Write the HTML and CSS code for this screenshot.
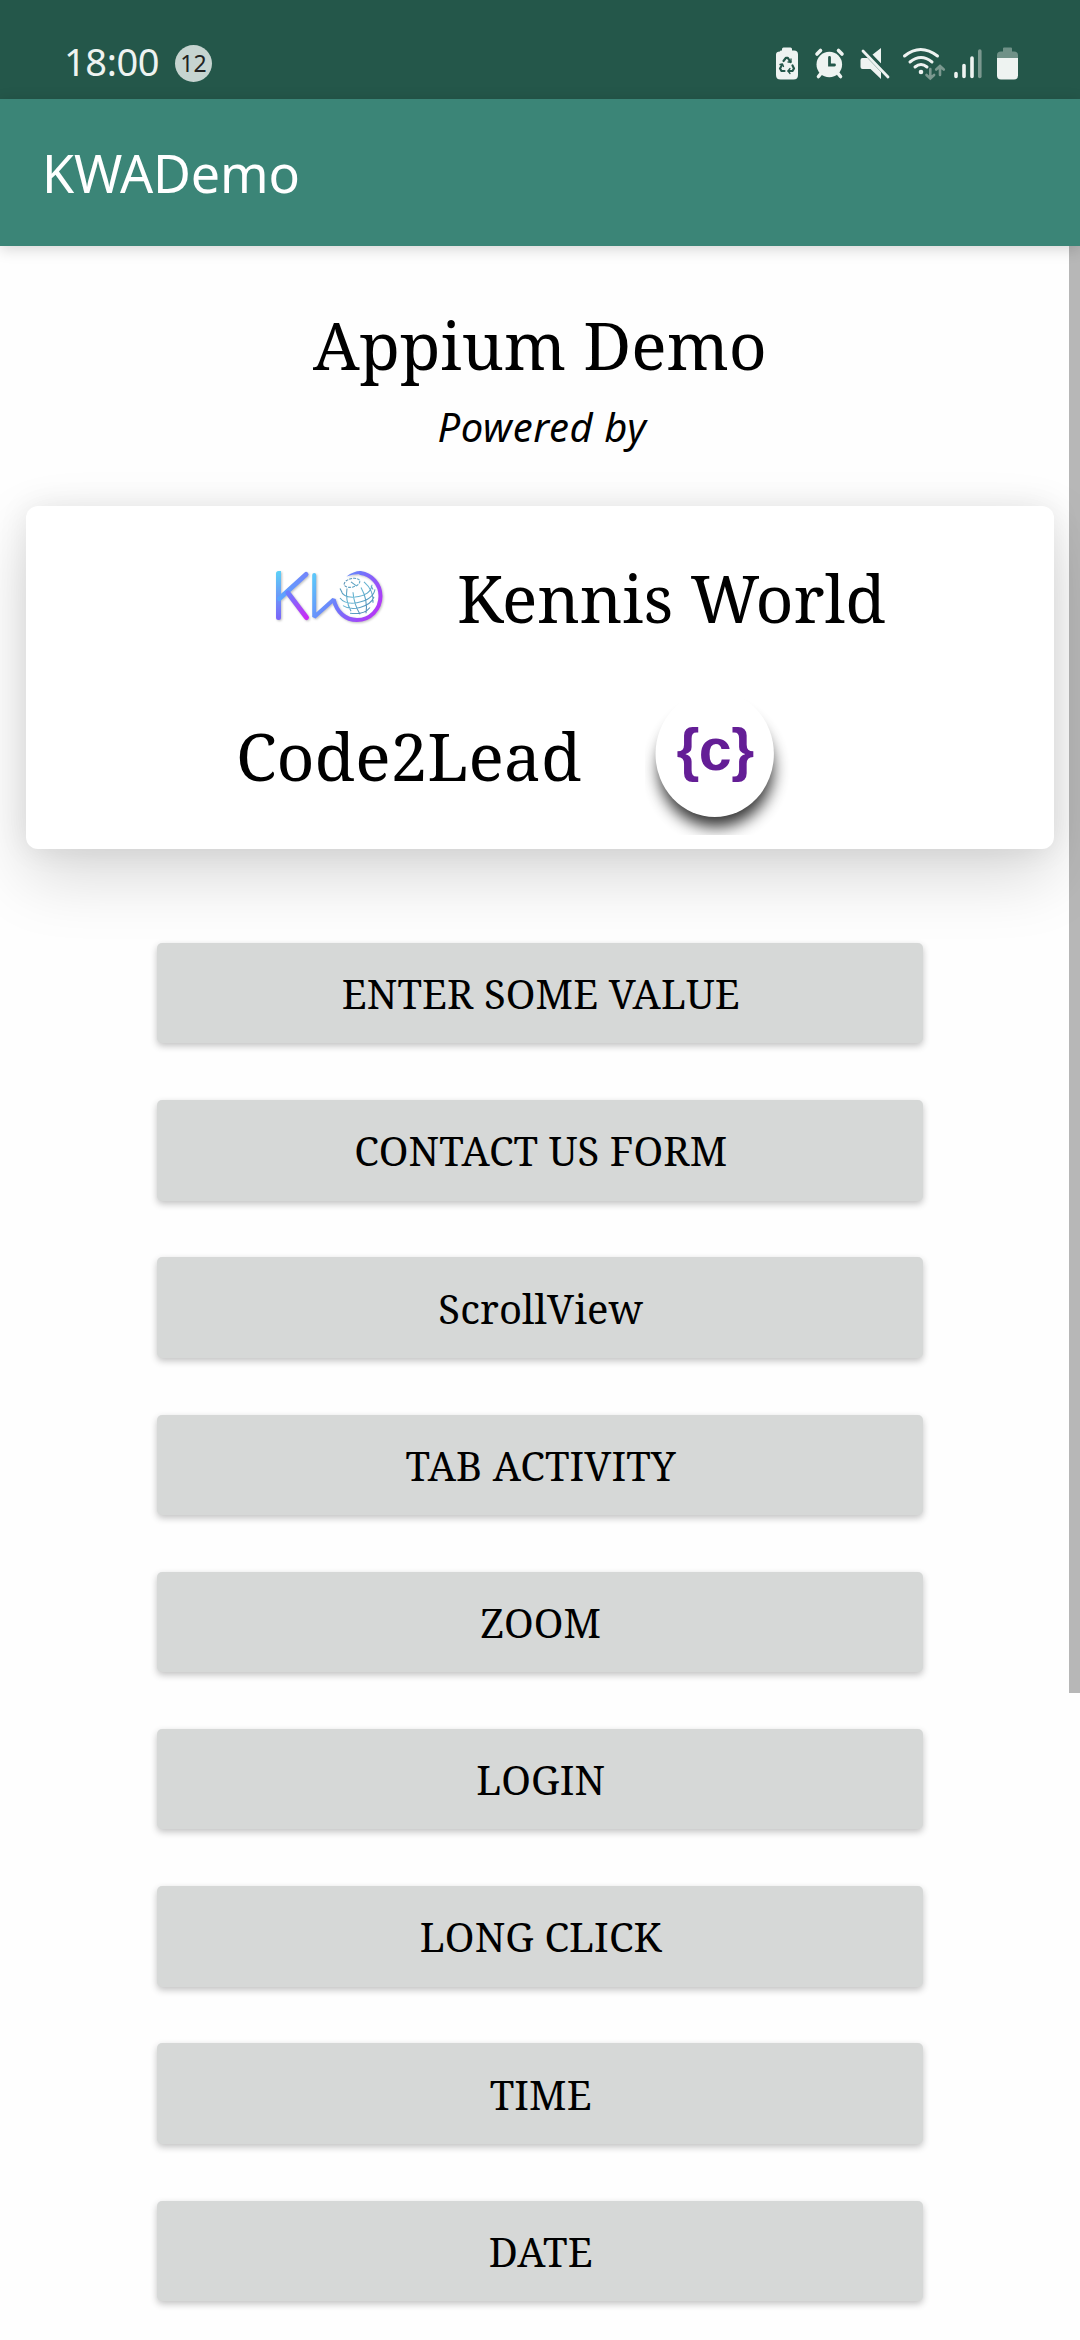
FILE: index.html
```html
<!DOCTYPE html>
<html lang="en">
<head>
<meta charset="utf-8">
<title>KWADemo</title>
<link rel="stylesheet" href="styles.css">
</head>
<body>
<header class="status">
  <span class="clock">18:00</span><span class="count">12</span>
  <svg class="status-icons" viewBox="750 30 300 80" width="300" height="80" fill="#eef3f1" stroke-linecap="round">
    <path d="M780 51.500q0-1 1-1h1v-1.500q0-1.500 1.500-1.500h7q1.500 0 1.500 1.500v1.500h2q4 0 4 4v20.500q0 4.500-4.500 4.500h-13q-4.500 0-4.500-4.500v-20.500q0-3 4-3z"/>
    <g fill="none" stroke="#24574a" stroke-width="2.200" stroke-linejoin="round"><path d="M783.500 61l2.500-3.200h1.800l2.700 4.200M792.500 65.500l1.500 3-1.500 2.500h-4M784.500 71h-3l-1.500-2.500 2-3.500"/><path d="M788 62h3v-3M790 68.500l-2 2.500 2 2.500M780 64.500l2.500-.5 1 2.500" stroke-width="1.300"/></g>
    <circle cx="829.300" cy="64.500" r="12.800"/>
    <g fill="none" stroke="#eef3f1" stroke-width="3.600"><path d="M817 54l3.500-3.500M842 54l-3.500-3.500M820.500 74l-2 2.500M838.500 74l2 2.500"/><path d="M829.500 57.500v7.500h5" stroke="#24574a" stroke-width="2.800"/></g>
    <path d="M881 48v16l-9-9zM860.500 60q0-2 2-2h5l13.500 14v7l-10.500-10h-8q-2 0-2-2z"/>
    <path d="M866 49.500l24 25" stroke="#24574a" stroke-width="2.500" stroke-linecap="butt"/><path d="M863 51l25 26" stroke="#eef3f1" stroke-width="2.800"/>
    <g fill="none" stroke="#eef3f1" stroke-width="3"><path d="M904.500 56q16-13 33 0M910 62q11-9 22 0M915 67q6-5 12 0"/></g><circle cx="921" cy="72" r="2.300"/>
    <g fill="none" stroke="#7b988f" stroke-width="2.600"><path d="M930.300 69v9M926.500 75l3.800 3.500 3.800-3.500M940 75v-8.500M936.200 69.500l3.800-3.500 3.800 3.500"/></g>
    <g stroke-width="3.600"><path stroke="#eef3f1" d="M956 73.500v3M964 65.500v11M972 58v18.500"/><path stroke="#7b988f" d="M979.800 51v25.500"/></g>
    <path fill="#6f9187" d="M997 58v-3q0-3.500 4-3.500h2v-3q0-1 1-1h7q1 0 1 1v3h2q4 0 4 3.500v3z"/><path d="M997 58h21v17.500q0 4-4 4h-13q-4 0-4-4z"/>
  </svg>
</header>
<div class="toolbar"><span class="app-name">KWADemo</span></div>
<main class="content">
  <h1 class="serif title">Appium Demo</h1>
  <p class="powered">Powered by</p>
  <section class="card">
    <div class="brand brand-kw">
      <svg class="kw-logo" viewBox="268 562 126 70" width="126" height="70" fill="none" stroke-linecap="round">
        <defs>
          <linearGradient id="v" gradientUnits="userSpaceOnUse" x1="0" y1="571" x2="0" y2="620"><stop stop-color="#5cd2f7"/><stop offset="1" stop-color="#7b62fa"/></linearGradient>
          <linearGradient id="a" gradientUnits="userSpaceOnUse" x1="279" y1="600" x2="306" y2="573"><stop stop-color="#5aa6ff"/><stop offset="1" stop-color="#7386fb"/></linearGradient>
          <linearGradient id="k" gradientUnits="userSpaceOnUse" x1="287" y1="594" x2="307" y2="618"><stop stop-color="#6b7cff"/><stop offset="1" stop-color="#cb29f5"/></linearGradient>
          <linearGradient id="w" gradientUnits="userSpaceOnUse" x1="315" y1="575" x2="376" y2="616"><stop stop-color="#5cc6fa"/><stop offset=".5" stop-color="#7076fc"/><stop offset="1" stop-color="#b734f7"/></linearGradient>
          <linearGradient id="g" gradientUnits="userSpaceOnUse" x1="340" y1="578" x2="374" y2="614"><stop stop-color="#4e83a9"/><stop offset=".5" stop-color="#67b7d3"/><stop offset="1" stop-color="#4f84b1"/></linearGradient>
        </defs>
        <g class="kw-strokes">
          <path stroke="url(#v)" stroke-width="5" d="M278.500 573.500h.01v44"/>
          <path stroke="url(#a)" stroke-width="5" d="M279.500 598.500L306 574.500"/>
          <path stroke="url(#k)" stroke-width="5" d="M288 593l18.500 24.500"/>
          <path stroke="url(#w)" stroke-width="4" stroke-linejoin="bevel" d="M314.200 575v42l19.500-17.500c3 13 12 20.500 23.300 20.500 13 0 23.500-10.500 23.500-24 0-12-9-21.500-20-23"/>
          <path fill="url(#w)" d="M346.500 576.500q7-5.500 14-5.500l1 3q-8-.5-15 2.500z"/>
        </g>
        <g stroke="url(#g)" stroke-width="1.100" stroke-linecap="butt" transform="translate(0 28) scale(1 .95)"><ellipse cx="352" cy="584" rx="8" ry="4.500" transform="rotate(-15 352 584)" stroke-dasharray="3 1"/><path d="M341 592q2 8 14 7 16-2 17-13M340 600q5 7 17 5 16-3 18-14M343 608q7 5 17 2 11-3 14-11M350 616q14 2 20-6M347 590q-2 12 4 24M353 594q1 13 7 23M361 589q7 13 5 27M364 583q10 9 9 22M351 583l5 4M340 590l2 4M371 587l2 4"/></g>
      </svg>
      <span class="serif brand-name kennis">Kennis World</span>
    </div>
    <div class="brand brand-code">
      <span class="serif brand-name code">Code2Lead</span>
      <svg class="code-logo" viewBox="645 685 150 150" width="150" height="150">
        <defs><filter id="blur" x="-30%" y="-30%" width="160%" height="160%"><feGaussianBlur stdDeviation="8"/></filter></defs>
        <ellipse cx="716" cy="769" rx="57" ry="58" fill="#000" opacity=".8" filter="url(#blur)"/>
        <ellipse cx="714.700" cy="754" rx="59.200" ry="63" fill="#fff"/>
        <text class="code-mark" x="715" y="769.500" text-anchor="middle">{c}</text>
      </svg>
    </div>
  </section>
  <nav class="menu">
    <button class="serif item">ENTER SOME VALUE</button>
    <button class="serif item">CONTACT US FORM</button>
    <button class="serif item">ScrollView</button>
    <button class="serif item">TAB ACTIVITY</button>
    <button class="serif item">ZOOM</button>
    <button class="serif item">LOGIN</button>
    <button class="serif item">LONG CLICK</button>
    <button class="serif item">TIME</button>
    <button class="serif item">DATE</button>
  </nav>
</main>
<div class="scrollbar"></div>
</body>
</html>
```
FILE: styles.css
```css
* { box-sizing: border-box; }
body { margin: 0; width: 1080px; height: 2340px; overflow: hidden; position: relative; background: #fefefe; font-family: "Noto Sans", sans-serif; color: #000; }
.serif { font-family: "Noto Serif", "DejaVu Serif Condensed", "DejaVu Serif", serif; font-weight: 400; }
.status { height: 99px; background: #24574a; display: flex; align-items: flex-start; padding-left: 64px; }
.clock { width: 111px; font-size: 38px; line-height: 52px; letter-spacing: -.4px; margin-top: 35px; color: #eef3f1; }
.count { width: 37px; height: 37px; margin-top: 45px; border-radius: 50%; background: #c6d4d0; color: #222; font-size: 23px; line-height: 37px; text-align: center; }
.status-icons { margin: 30px 30px 0 auto; }
.toolbar { position: relative; z-index: 1; height: 147px; background: #3b8577; padding-left: 42px; box-shadow: 0 3px 14px rgba(0,0,0,.17); }
.app-name { display: block; font-size: 52px; line-height: 147px; letter-spacing: -.2px; color: #fff; }
.title { margin: 53px 0 0; height: 90px; font-size: 66px; line-height: 90px; text-align: center; }
.powered { margin: 10px 0 0; padding-left: 4px; height: 56px; font-size: 40px; line-height: 56px; letter-spacing: .6px; font-style: italic; text-align: center; }
.card { margin: 51px 26px 0; height: 342.5px; border-radius: 12px; background: #fff; box-shadow: 0 28px 66px rgba(0,0,0,.15), 0 0 30px rgba(0,0,0,.08); padding-top: 22px; }
.brand { display: flex; align-items: flex-start; }
.brand-kw { padding: 34px 0 0 242px; height: 157px; }
.brand-code { padding-left: 210px; }
.brand-name { font-size: 66px; line-height: 90px; white-space: nowrap; }
.kennis { margin: -10px 0 0 63px; }
.code { width: 344px; margin-top: 25px; }
.code-logo { margin-left: 65px; }
.code-mark { font: 700 59px "Liberation Sans", sans-serif; fill: #641e96; letter-spacing: -.5px; }
.kw-strokes { filter: drop-shadow(1px 1px 1px rgba(0,0,0,.25)); }
.menu { padding: 94.5px 157px 0 156.5px; display: grid; grid-auto-rows: 100.4px; row-gap: 56.8px; }
.item { border: 0; padding: 2px 0 0 2px; border-radius: 5px; background: #d6d8d7; font-size: 40px; line-height: 54px; letter-spacing: .1px; color: #000; box-shadow: 0 3px 7px rgba(0,0,0,.24); }
.scrollbar { position: absolute; right: 0; top: 246px; width: 11px; height: 1447px; background: rgba(0,0,0,.28); }
```
